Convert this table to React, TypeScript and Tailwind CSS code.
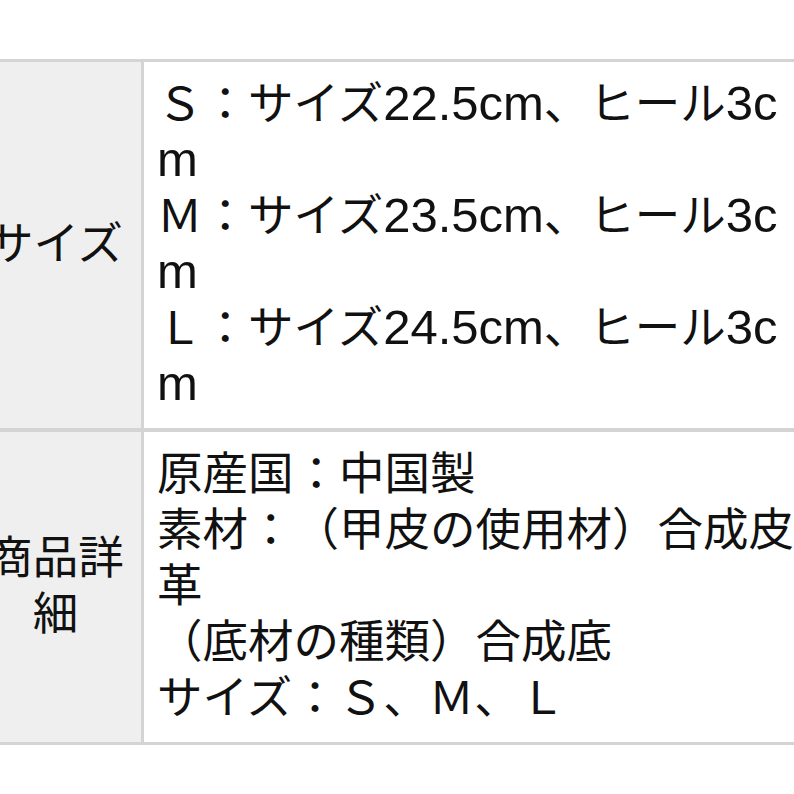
import React from "react";

type Part = string | { l: string };

const L = (s: string) => ({ l: s });

const rows: { head: string; lines: Part[][] }[] = [
  {
    head: "サイズ",
    lines: [
      ["Ｓ：サイズ", L("22.5cm"), "、ヒール", L("3cm")],
      ["Ｍ：サイズ", L("23.5cm"), "、ヒール", L("3cm")],
      ["Ｌ：サイズ", L("24.5cm"), "、ヒール", L("3cm")],
    ],
  },
  {
    head: "商品詳細",
    lines: [
      ["原産国：中国製"],
      ["素材：（甲皮の使用材）合成皮革"],
      ["（底材の種類）合成底"],
      ["サイズ：Ｓ、Ｍ、Ｌ"],
    ],
  },
];

export default function App() {
  return (
    <div
      className="w-[794px] h-[794px] bg-white overflow-hidden text-[#111] text-[45.5px] leading-[56px] [text-spacing-trim:space-all]"
      style={{ fontFamily: '"Liberation Sans", "Noto Sans CJK JP", sans-serif' }}
    >
      <div className="h-[59px]" />
      <div className="ml-[-30px] w-[860px] border-t-[3px] border-b-[3px] border-[#d4d4d4]">
        {rows.map((r, i) => (
          <div
            key={i}
            className={"flex " + (i > 0 ? "border-t-[4px] border-[#d4d4d4]" : "")}
          >
            <div className="w-[174px] shrink-0 bg-[#efefef] px-[15px] flex items-center justify-center text-center border-r-[3px] border-[#d4d4d4]">
              <span>{r.head}</span>
            </div>
            <div className="w-[673px] shrink-0 pl-[13px] pr-[15px] py-[15px]">
              {r.lines.map((parts, j) => (
                <div key={j} className="break-all">
                  {parts.map((p, k) =>
                    typeof p === "string" ? (
                      <span key={k}>{p}</span>
                    ) : (
                      <span key={k} className="text-[49px] leading-[0px]">
                        {p.l}
                      </span>
                    )
                  )}
                </div>
              ))}
            </div>
          </div>
        ))}
      </div>
    </div>
  );
}
